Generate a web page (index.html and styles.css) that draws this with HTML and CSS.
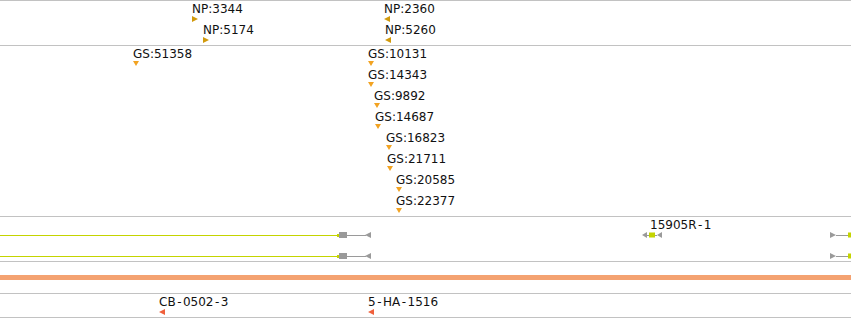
FILE: index.html
```html
<!DOCTYPE html>
<html lang="en">
  <head>
    <meta charset="UTF-8" />
    <meta name="viewport" content="width=device-width, initial-scale=1.0" />
    <title>Genome Browser Tracks</title>
    <link rel="stylesheet" href="styles.css">
  </head>
  <body>
    <div class="panel">
      <!-- NP features -->
      <div class="track track-np">
        <div class="feat" style="left: 192px; top: 1px">
          <span class="label">NP:3344</span>
          <svg class="glyph" width="6" height="6"><polygon class="np" points="0,0 6,3 0,6" /></svg>
        </div>
        <div class="feat" style="left: 203px; top: 22px">
          <span class="label">NP:5174</span>
          <svg class="glyph" width="6" height="6"><polygon class="np" points="0,0 6,3 0,6" /></svg>
        </div>
        <div class="feat" style="left: 384px; top: 1px">
          <span class="label">NP:2360</span>
          <svg class="glyph" width="6" height="6"><polygon class="np" points="6,0 0,3 6,6" /></svg>
        </div>
        <div class="feat" style="left: 385px; top: 22px">
          <span class="label">NP:5260</span>
          <svg class="glyph" width="6" height="6"><polygon class="np" points="6,0 0,3 6,6" /></svg>
        </div>
      </div>

      <!-- GS features -->
      <div class="track track-gs">
        <div class="feat" style="left: 133px; top: 1px">
          <span class="label">GS:51358</span>
          <svg class="glyph" width="6" height="6"><polygon class="gs" points="0,0 6,0 3,5" /></svg>
        </div>
        <div class="feat" style="left: 368px; top: 1px">
          <span class="label">GS:10131</span>
          <svg class="glyph" width="6" height="6"><polygon class="gs" points="0,0 6,0 3,5" /></svg>
        </div>
        <div class="feat" style="left: 368px; top: 22px">
          <span class="label">GS:14343</span>
          <svg class="glyph" width="6" height="6"><polygon class="gs" points="0,0 6,0 3,5" /></svg>
        </div>
        <div class="feat" style="left: 374px; top: 43px">
          <span class="label">GS:9892</span>
          <svg class="glyph" width="6" height="6"><polygon class="gs" points="0,0 6,0 3,5" /></svg>
        </div>
        <div class="feat" style="left: 375px; top: 64px">
          <span class="label">GS:14687</span>
          <svg class="glyph" width="6" height="6"><polygon class="gs" points="0,0 6,0 3,5" /></svg>
        </div>
        <div class="feat" style="left: 386px; top: 85px">
          <span class="label">GS:16823</span>
          <svg class="glyph" width="6" height="6"><polygon class="gs" points="0,0 6,0 3,5" /></svg>
        </div>
        <div class="feat" style="left: 387px; top: 106px">
          <span class="label">GS:21711</span>
          <svg class="glyph" width="6" height="6"><polygon class="gs" points="0,0 6,0 3,5" /></svg>
        </div>
        <div class="feat" style="left: 396px; top: 127px">
          <span class="label">GS:20585</span>
          <svg class="glyph" width="6" height="6"><polygon class="gs" points="0,0 6,0 3,5" /></svg>
        </div>
        <div class="feat" style="left: 396px; top: 148px">
          <span class="label">GS:22377</span>
          <svg class="glyph" width="6" height="6"><polygon class="gs" points="0,0 6,0 3,5" /></svg>
        </div>
      </div>

      <!-- Gene models -->
      <div class="track track-genes">
        <span class="label gene-label" style="left: 650px">15905R<span class="dash">-</span>1</span>
        <svg class="gene-row" width="851" height="7">
          <rect class="cds" x="0" y="3" width="338" height="1" />
          <rect class="cds" x="337" y="2" width="2" height="3" />
          <rect class="utr" x="339" y="0" width="8" height="6" />
          <rect class="utr" x="347" y="3" width="19" height="1" />
          <polygon class="utr" points="365,3 371,0 371,6" />

          <polygon class="utr" points="642,3 647,0 647,6" />
          <rect class="utr" x="647" y="3" width="2" height="1" />
          <rect class="cds" x="649" y="0.5" width="6" height="5" />
          <rect class="utr" x="655" y="3" width="2" height="1" />
          <polygon class="utr" points="657,3 662,0 662,6" />

          <polygon class="utr" points="830,0 836,3 830,6" />
          <rect class="utr" x="836" y="3" width="12" height="1" />
          <rect class="cds" x="848" y="0.5" width="3" height="5" />
        </svg>
        <svg class="gene-row" width="851" height="7">
          <rect class="cds" x="0" y="3" width="338" height="1" />
          <rect class="cds" x="337" y="2" width="2" height="3" />
          <rect class="utr" x="339" y="0" width="8" height="6" />
          <rect class="utr" x="347" y="3" width="19" height="1" />
          <polygon class="utr" points="365,3 371,0 371,6" />

          <polygon class="utr" points="830,0 836,3 830,6" />
          <rect class="utr" x="836" y="3" width="12" height="1" />
          <rect class="cds" x="848" y="0.5" width="3" height="5" />
        </svg>
      </div>

      <!-- Sequence band -->
      <div class="track track-band">
        <div class="band"></div>
      </div>

      <!-- Alleles -->
      <div class="track track-alleles">
        <div class="feat" style="left: 159px; top: 1px">
          <span class="label">CB<span class="dash">-</span>0502<span class="dash">-</span>3</span>
          <svg class="glyph" width="6" height="6"><polygon class="allele" points="6,0 0,3 6,6" /></svg>
        </div>
        <div class="feat" style="left: 368px; top: 1px">
          <span class="label">5<span class="dash">-</span>HA<span class="dash">-</span>1516</span>
          <svg class="glyph" width="6" height="6"><polygon class="allele" points="6,0 0,3 6,6" /></svg>
        </div>
      </div>
    </div>
  </body>
</html>
```

FILE: styles.css
```css
body {
  margin: 0;
  background: #fff;
  font-family: "DejaVu Sans", Verdana, sans-serif;
  font-size: 12px;
  color: #111;
}
.panel {
  width: 851px;
  overflow: hidden;
}
.track {
  position: relative;
  border-top: 1px solid #c2c2c2;
}
.track-np {
  height: 44px;
}
.track-gs {
  height: 170px;
}
.track-genes {
  height: 29px;
  padding-top: 15px;
}
.track-band {
  height: 18px;
  padding-top: 13px;
}
.track-alleles {
  height: 23px;
  border-bottom: 1px solid #c2c2c2;
}
.feat {
  position: absolute;
}
.label {
  display: block;
  line-height: 14px;
  white-space: nowrap;
}
.dash {
  padding: 0 1.5px;
}
.glyph {
  display: block;
}
.gene-label {
  position: absolute;
  top: 1px;
}
.gene-row {
  display: block;
}
.gene-row + .gene-row {
  margin-top: 14px;
}
.band {
  height: 5px;
  background: #f4a271;
}
.np {
  fill: #d19a0c;
}
.gs {
  fill: #f2a322;
}
.allele {
  fill: #f0603c;
}
.cds {
  fill: #c4d400;
}
.utr {
  fill: #9a9a9a;
}
```
